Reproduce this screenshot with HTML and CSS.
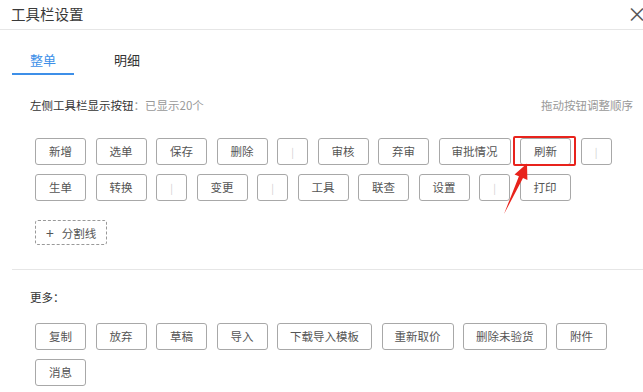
FILE: index.html
```html
<!doctype html>
<html>
  <head>
    <meta charset="UTF-8" />
    <title>工具栏设置</title>
    <link rel="stylesheet" href="styles.css">
  </head>
  <body>
    <div class="dialog">
      <div class="dialog-header">
        <span class="dialog-title">工具栏设置</span>
        <span class="close">×</span>
      </div>

      <div class="tabs">
        <div class="tab active">整单</div>
        <div class="tab">明细</div>
      </div>

      <div class="section-head">
        <span class="label">左侧工具栏显示按钮<em>：已显示20个</em></span>
        <span class="hint">拖动按钮调整顺序</span>
      </div>

      <div class="btn-list">
        <span class="btn">新增</span>
        <span class="btn">选单</span>
        <span class="btn">保存</span>
        <span class="btn">删除</span>
        <span class="btn sep">|</span>
        <span class="btn">审核</span>
        <span class="btn">弃审</span>
        <span class="btn">审批情况</span>
        <span class="btn marked">刷新</span>
        <span class="btn sep">|</span>
        <span class="btn">生单</span>
        <span class="btn">转换</span>
        <span class="btn sep">|</span>
        <span class="btn">变更</span>
        <span class="btn sep">|</span>
        <span class="btn">工具</span>
        <span class="btn">联查</span>
        <span class="btn">设置</span>
        <span class="btn sep">|</span>
        <span class="btn">打印</span>
      </div>

      <div class="add-sep"><span class="plus">+</span>分割线</div>

      <div class="divider"></div>

      <div class="more-label">更多：</div>

      <div class="btn-list more">
        <span class="btn">复制</span>
        <span class="btn">放弃</span>
        <span class="btn">草稿</span>
        <span class="btn">导入</span>
        <span class="btn">下载导入模板</span>
        <span class="btn">重新取价</span>
        <span class="btn">删除未验货</span>
        <span class="btn">附件</span>
        <span class="btn">消息</span>
      </div>

      <!-- 标注箭头 -->
      <svg class="arrow" width="36" height="60" viewBox="0 0 36 60">
        <polygon points="6,56 20.9,18.3 16.5,16.4 29,5.5 29.4,22 25,20.1" fill="#e8231c" />
      </svg>
    </div>
  </body>
</html>
```

FILE: styles.css
```css
* {
  box-sizing: border-box;
}

body {
  margin: 0;
  background: #fff;
  color: #333;
  font-family: "Noto Sans CJK SC", "Noto Sans", sans-serif;
}

.dialog {
  position: relative;
  width: 643px;
  height: 392px;
  overflow: hidden;
}

.dialog-header {
  height: 30px;
  display: flex;
  align-items: center;
  justify-content: space-between;
  padding: 0 0 3px 11px;
  border-bottom: 1px solid #e6e6e6;
}

.dialog-title {
  font-size: 14.5px;
  color: #3a3a3a;
}

.close {
  font-size: 20px;
  color: #555;
  margin-right: -4px;
}

.tabs {
  display: flex;
  gap: 22px;
  margin-top: 18px;
  padding-left: 12px;
}

.tab {
  width: 62px;
  text-align: center;
  font-size: 13px;
  line-height: 24px;
  padding-bottom: 1px;
  border-bottom: 2px solid transparent;
  color: #333;
}

.tab.active {
  color: #3d8fe8;
  border-bottom-color: #3d8fe8;
}

.section-head {
  display: flex;
  justify-content: space-between;
  margin-top: 20px;
  padding: 0 10px 0 30px;
  font-size: 11.5px;
  line-height: 20px;
}

.label em {
  font-style: normal;
  color: #999;
}

.hint {
  color: #999;
}

.btn-list {
  display: flex;
  flex-wrap: wrap;
  gap: 9px 9.5px;
  margin-top: 23px;
  padding: 0 20px 0 35px;
}

.btn {
  position: relative;
  height: 27px;
  min-width: 51px;
  padding: 0 12px;
  border: 1px solid #a8a8a8;
  border-radius: 3px;
  font-size: 11.5px;
  line-height: 25px;
  text-align: center;
  color: #555;
}

.btn.sep {
  min-width: 0;
  width: 31px;
  padding: 0;
  color: #d0d0d0;
  font-size: 10px;
}

.btn.marked::after {
  content: "";
  position: absolute;
  left: -8px;
  right: -6px;
  top: -3px;
  bottom: -2px;
  border: 2.5px solid #e8231c;
  border-radius: 2px;
}

.add-sep {
  display: flex;
  align-items: center;
  width: 72px;
  height: 25px;
  margin: 19px 0 0 35px;
  padding-left: 10px;
  border: 1px dashed #999;
  border-radius: 3px;
  font-size: 11.5px;
  color: #555;
}

.plus {
  font-size: 14px;
  margin-right: 8px;
}

.divider {
  height: 1px;
  margin: 24px 0 0 12px;
  background: #e6e6e6;
}

.more-label {
  margin-top: 17px;
  padding-left: 30px;
  font-size: 11.5px;
  line-height: 20px;
}

.btn-list.more {
  margin-top: 16px;
}

.arrow {
  position: absolute;
  left: 498px;
  top: 158px;
}
```
